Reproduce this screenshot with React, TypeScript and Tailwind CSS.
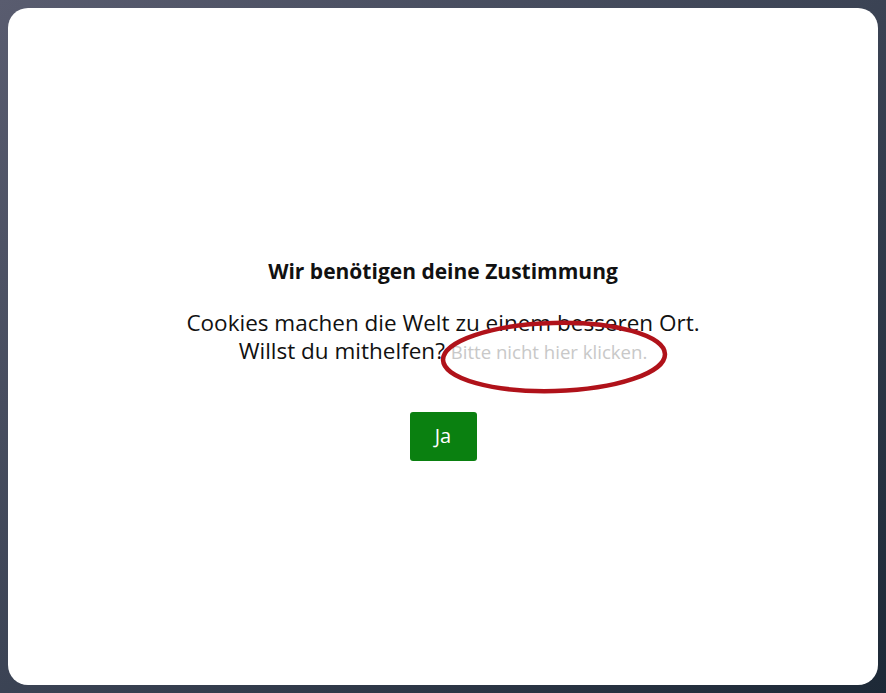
import React from 'react'

export default function App() {
    return (
        <div className='h-[693px] w-full p-2 bg-gradient-to-br from-[#595c6f] via-[#3b4354] to-[#1d2937]' style={{ fontFamily: '"Open Sans", "Noto Sans", sans-serif' }}>
            <div className='h-full w-full bg-white rounded-[20px] flex flex-col items-center justify-center pt-6'>
                <h1 className='text-[21px] font-bold text-[#111] leading-7'>Wir benötigen deine Zustimmung</h1>
                <p className='mt-6 text-[22.5px] text-[#111] leading-7 text-center'>
                    Cookies machen die Welt zu einem besseren Ort.<br />
                    Willst du mithelfen?{' '}
                    <span className='relative text-[18.6px] text-[#c8c8c8]'>
                        Bitte nicht hier klicken.
                        <svg className='absolute -left-[12px] -top-[20px] pointer-events-none' width='230' height='76' viewBox='0 0 230 76'>
                            <ellipse cx='115' cy='38' rx='111' ry='34' fill='none' stroke='#b0121a' strokeWidth='4.5' transform='rotate(-1.5 115 38)' />
                        </svg>
                    </span>
                </p>
                <button className='mt-[46px] w-[67px] h-[49px] bg-[#0a8010] text-white text-[20px] rounded-[3px]'>Ja</button>
            </div>
        </div>
    )
}
